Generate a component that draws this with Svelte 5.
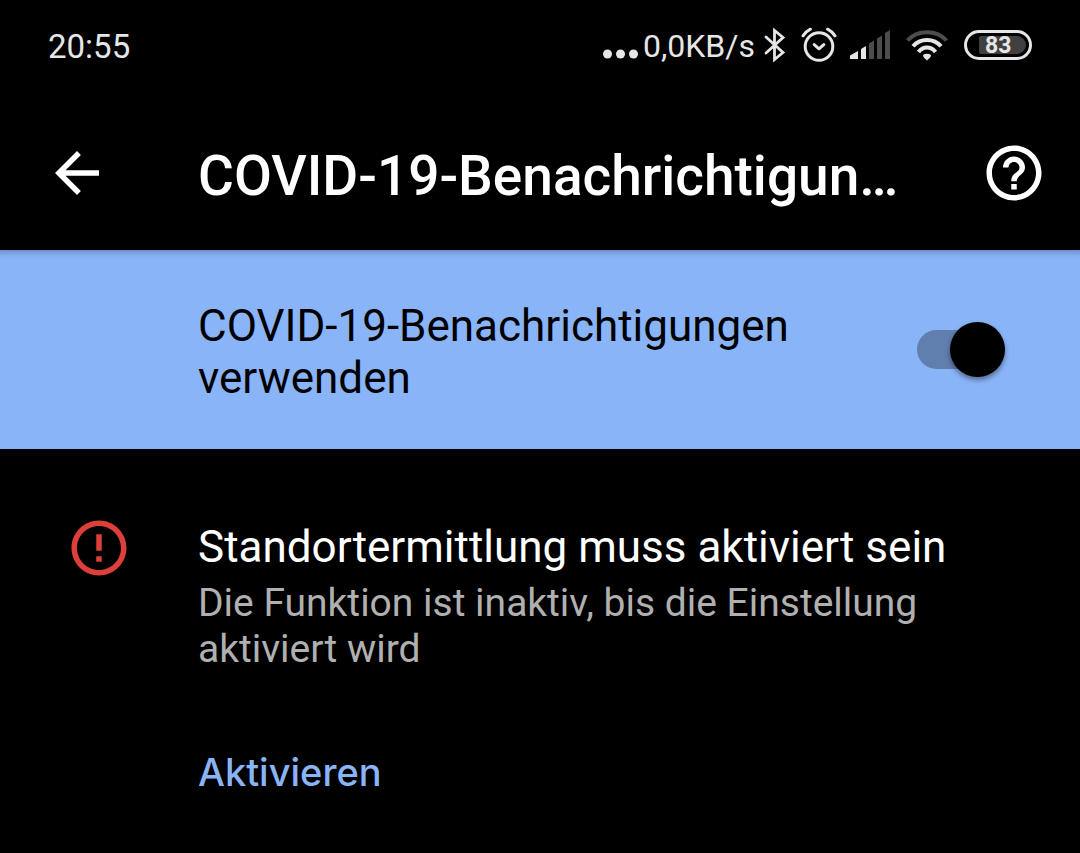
<script>
  let enabled = $state(true);
</script>

<div class="screen">
  <div class="status">
    <time>20:55</time>
    <div class="indicators">
      <svg class="dots" width="36" height="34" viewBox="0 0 36 34" fill="#e6e6e6" aria-hidden="true">
        <circle cx="4.5" cy="26" r="4.5" /><circle cx="17.5" cy="26" r="4.5" /><circle cx="30.5" cy="26" r="4.5" />
      </svg>
      <span class="speed">0,0KB/s</span>
      <svg class="bluetooth" width="22" height="36" viewBox="0 0 22 36" fill="none" stroke="#e6e6e6" stroke-width="2.8" stroke-linecap="round" stroke-linejoin="miter" aria-hidden="true">
        <path d="M2 10 L19 25.5 L10.5 32.5 V3.5 L19 10.5 L2 26" />
      </svg>
      <svg class="alarm" width="36" height="36" viewBox="0 0 36 36" fill="none" stroke="#e6e6e6" stroke-width="3" stroke-linecap="round" aria-hidden="true">
        <circle cx="18" cy="19.5" r="13.8" />
        <path d="M2 8.8 Q4.8 4.6 9.4 2.2 M34 8.8 Q31.2 4.6 26.6 2.2" />
        <path d="M13.2 17.6 L18 21.8 L22.8 17.6" stroke-linejoin="round" />
      </svg>
      <svg class="signal" width="40" height="30" viewBox="0 0 40 30" aria-hidden="true">
        <path fill="#e6e6e6" d="M0 29 V25.5 L8 21 V29 Z M11 29 V19 L16 16 V29 Z" />
        <path fill="#4d4d4d" d="M19 29 V13.5 L24 10.5 V29 Z M27 29 V8.5 L32 5.5 V29 Z M35 29 V3 L40 0 V29 Z" />
      </svg>
      <svg class="wifi" width="42" height="32" viewBox="0 0 42 32" fill="none" stroke="#e6e6e6" stroke-width="4" aria-hidden="true">
        <path stroke="#4d4d4d" d="M1.5 11.5 C11 .5 31 .5 40.5 11.5" />
        <path d="M7 17.2 C14 8.8 28 8.8 35 17.2" />
        <path d="M12.5 23 C17 17 25 17 29.5 23" />
        <path fill="#e6e6e6" stroke="none" d="M17 27 Q17 24.8 21 24.8 T25 27 Q24.5 28.5 21 31.5 Q17.5 28.5 17 27 Z" />
      </svg>
      <span class="battery"><span class="level">83</span></span>
    </div>
  </div>

  <header>
    <button class="icon-button" aria-label="Zurück">
      <svg width="66" height="66" viewBox="0 0 24 24" fill="#fff" aria-hidden="true">
        <path d="M20 11H7.83l5.59-5.59L12 4l-8 8 8 8 1.41-1.41L7.83 13H20v-2z" />
      </svg>
    </button>
    <h1>COVID-19-Benachrichtigun…</h1>
    <button class="icon-button" aria-label="Hilfe">
      <svg width="66" height="66" viewBox="0 0 24 24" fill="#fff" aria-hidden="true">
        <path d="M11 18h2v-2h-2v2zm1-16C6.48 2 2 6.48 2 12s4.48 10 10 10 10-4.48 10-10S17.52 2 12 2zm0 18c-4.41 0-8-3.59-8-8s3.59-8 8-8 8 3.59 8 8-3.59 8-8 8zm0-14c-2.21 0-4 1.79-4 4h2c0-1.1.9-2 2-2s2 .9 2 2c0 2-3 1.75-3 5h2c0-2.25 3-2.5 3-5 0-2.21-1.79-4-4-4z" />
      </svg>
    </button>
  </header>

  <label class="master">
    <span>COVID-19-Benachrichtigungen verwenden</span>
    <input type="checkbox" role="switch" bind:checked={enabled} />
  </label>

  <section>
    <svg width="66" height="66" viewBox="0 0 24 24" fill="#dd3f3a" aria-hidden="true">
      <path d="M11 15h2v2h-2v-2zm0-8h2v6h-2V7zm.99-5C6.47 2 2 6.48 2 12s4.47 10 9.99 10C17.52 22 22 17.52 22 12S17.52 2 11.99 2zM12 20c-4.42 0-8-3.58-8-8s3.58-8 8-8 8 3.58 8 8-3.58 8-8 8z" />
    </svg>
    <div class="message">
      <h2>Standortermittlung muss aktiviert sein</h2>
      <p>Die Funktion ist inaktiv, bis die Einstellung aktiviert wird</p>
      <button class="action">Aktivieren</button>
    </div>
  </section>
</div>

<style>
  :global(body) {
    margin: 0;
    background: #000;
  }
  .screen {
    color: #fff;
    font-family: Roboto, sans-serif;
  }
  button {
    border: 0;
    padding: 0;
    background: none;
    color: inherit;
    font-family: inherit;
    cursor: pointer;
  }
  svg {
    display: block;
    flex: none;
  }
  .status {
    display: flex;
    align-items: center;
    justify-content: space-between;
    height: 90px;
    padding: 0 48px;
    color: #e6e6e6;
    font-size: 33px;
  }
  time,
  .speed {
    padding-top: 2px;
  }
  .indicators {
    display: flex;
    align-items: center;
  }
  .dots {
    margin-right: 4px;
  }
  .speed {
    font-size: 32px;
  }
  .bluetooth {
    margin-left: 9px;
  }
  .alarm {
    margin-left: 15px;
  }
  .signal {
    margin-left: 13px;
  }
  .wifi {
    margin-left: 16px;
  }
  .battery {
    box-sizing: border-box;
    width: 68px;
    height: 30px;
    margin-left: 16px;
    padding: 3px;
    border: 3px solid #e6e6e6;
    border-radius: 15px;
  }
  .level {
    display: block;
    box-sizing: border-box;
    height: 18px;
    margin-left: 9px;
    padding-left: 6px;
    border-radius: 2px 9px 9px 2px;
    background: #404040;
    font-size: 23px;
    font-weight: 700;
    line-height: 19px;
  }
  header {
    display: flex;
    align-items: center;
    box-sizing: border-box;
    height: 160px;
    padding: 6px 33px 0 44px;
  }
  .icon-button {
    flex: none;
  }
  h1 {
    flex: 1;
    min-width: 0;
    margin: 0 60px 0 88px;
    padding-top: 6px;
    overflow: hidden;
    font-size: 55px;
    font-weight: 500;
    line-height: 72px;
    text-overflow: ellipsis;
    white-space: nowrap;
  }
  .master {
    display: flex;
    align-items: center;
    justify-content: space-between;
    box-sizing: border-box;
    min-height: 199px;
    padding: 0 75px 0 198px;
    background: #8ab4f8;
    box-shadow: inset 0 8px 8px -8px #00000066;
    color: #000;
    font-size: 44px;
    line-height: 52px;
  }
  .master span {
    flex: 1;
    max-width: 640px;
    padding-top: 4px;
  }
  input {
    appearance: none;
    position: relative;
    flex: none;
    width: 88px;
    height: 39px;
    margin: 0;
    border-radius: 20px;
    background: #607eae;
  }
  input::before {
    content: "";
    position: absolute;
    top: -8px;
    left: 0;
    width: 55px;
    height: 55px;
    border-radius: 50%;
    background: #000;
    box-shadow: 0 3px 5px #00000066;
  }
  input:checked::before {
    left: 33px;
  }
  section {
    display: flex;
    align-items: flex-start;
    gap: 66px;
    padding: 66px 66px 0;
  }
  .message {
    flex: 1;
  }
  h2 {
    margin: 0;
    padding-top: 6px;
    font-size: 44px;
    font-weight: 400;
    line-height: 52px;
  }
  p {
    max-width: 760px;
    margin: 7px 0 0;
    color: #b0b0b0;
    font-size: 39px;
    line-height: 46px;
  }
  .action {
    margin-top: 76px;
    color: #8ab4f8;
    font-family: Inter, Roboto, sans-serif;
    font-size: 38px;
    font-weight: 500;
    line-height: 48px;
  }
</style>
